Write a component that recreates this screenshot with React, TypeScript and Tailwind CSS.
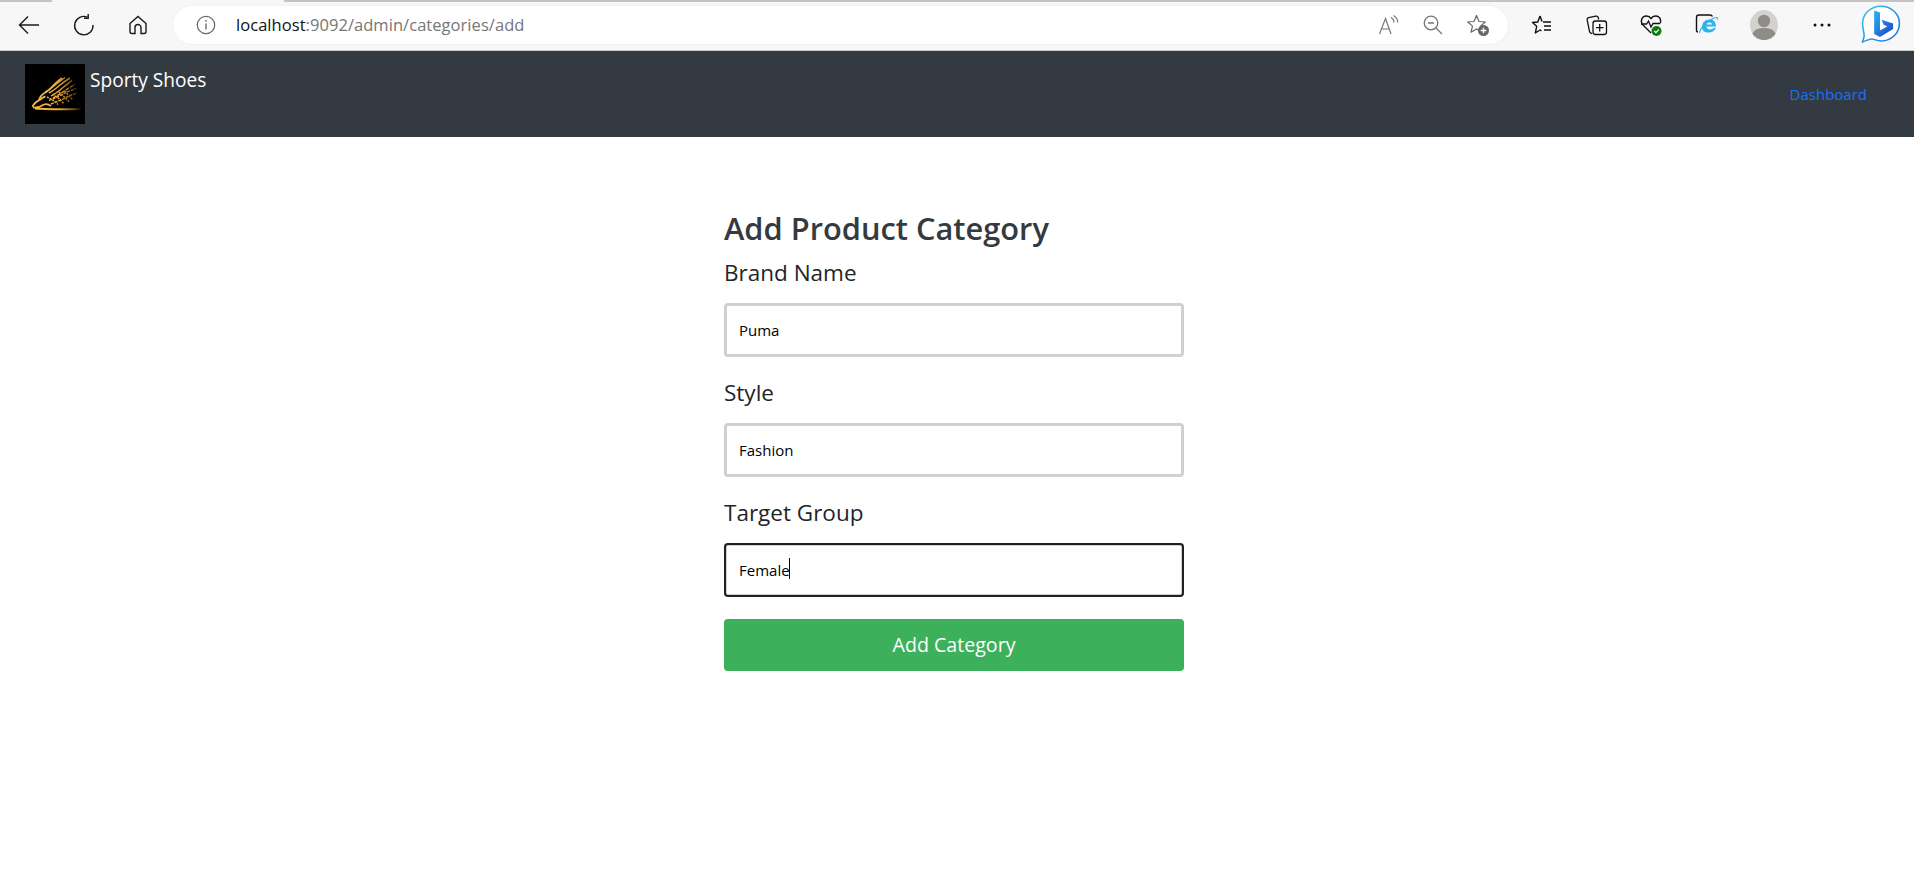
import React from 'react';

const uiFont = "font-['Open_Sans','Noto_Sans',sans-serif]";

const ToolButton = ({ children, className = '' }: { children: React.ReactNode; className?: string }) => (
  <div className={`flex items-center justify-center ${className}`}>{children}</div>
);

const BackIcon = () => (
  <svg width="24" height="24" viewBox="0 0 24 24" fill="none" stroke="#1a1a1a" strokeWidth="1.4">
    <path d="M22 12H3M11 3.5 2.5 12l8.500 8.500" />
  </svg>
);

const ReloadIcon = () => (
  <svg width="24" height="24" viewBox="0 0 24 24" fill="none" stroke="#1a1a1a" strokeWidth="1.4">
    <path d="M15.500 4.200A9.200 9.200 0 1 0 21 12" />
    <path d="M16.200 1v4.200H12" />
  </svg>
);

const HomeIcon = () => (
  <svg width="22" height="22" viewBox="0 0 22 22" fill="none" stroke="#1a1a1a" strokeWidth="1.4">
    <path d="M3 9.500 11 2.500l8 7v8a2 2 0 0 1-2 2h-3v-6a3 3 0 0 0-6 0v6H5a2 2 0 0 1-2-2z" />
  </svg>
);

const InfoIcon = () => (
  <svg width="20" height="20" viewBox="0 0 20 20" fill="none" stroke="#666">
    <circle cx="10" cy="10" r="8.700" strokeWidth="1.200" />
    <path d="M10 8.500v6" strokeWidth="1.300" />
    <circle cx="10" cy="5.800" r="0.900" fill="#666" stroke="none" />
  </svg>
);

const ReadAloudIcon = () => (
  <svg width="22" height="22" viewBox="0 0 22 22" fill="none" stroke="#777" strokeWidth="1.200">
    <path d="M1.500 20 7.500 4.500 13 20M3.500 15h8" />
    <path d="M13 3.500c1.800 1 3 2.700 3 5M15.500 1.500c2.500 1.500 4.200 4 4.200 7" />
  </svg>
);

const ZoomOutIcon = () => (
  <svg width="20" height="20" viewBox="0 0 20 20" fill="none" stroke="#777" strokeWidth="1.300">
    <circle cx="8" cy="8" r="6.800" />
    <path d="M5 8h6M13 13l6 6" />
  </svg>
);

const StarAddIcon = () => (
  <svg width="24" height="24" viewBox="0 0 24 24" fill="none">
    <path d="M10.500 2.500 13 8.500l6.300.5-4.800 4.100 1.500 6.100-5.500-3.300-5.500 3.300 1.500-6.100L1.700 9l6.300-.5z" stroke="#666" strokeWidth="1.200" strokeLinejoin="round" />
    <circle cx="17.500" cy="17.500" r="5.500" fill="#666" />
    <path d="M17.500 14.700v5.600M14.700 17.500h5.600" stroke="#fff" strokeWidth="1.300" />
  </svg>
);

const FavoritesIcon = () => (
  <svg width="22" height="22" viewBox="0 0 22 22" fill="none" stroke="#111" strokeWidth="1.400" strokeLinejoin="round">
    <path d="M9 2 6.800 8 1.500 8.500l4.200 3.800L4.300 19 9 16l1.500.8" />
    <path d="M9 2l2 5.500" />
    <path d="M12 8h8M13 12h7M13 16h7" />
  </svg>
);

const CollectionsIcon = () => (
  <svg width="22" height="22" viewBox="0 0 22 22" fill="none" stroke="#111" strokeWidth="1.300">
    <path d="M6 19.500c-1.200 0-2-.6-2.400-1.700L1.200 6.200C1 5 1.500 4 2.700 3.700l7-1.500c1.200-.2 2.200.3 2.500 1.300l.5 2" />
    <rect x="7" y="7" width="13.500" height="13.500" rx="2.500" />
    <path d="M13.700 10v7.500M10 13.700h7.500" />
  </svg>
);

const HealthIcon = () => (
  <svg width="24" height="24" viewBox="0 0 24 24" fill="none">
    <path d="M11 20 3.500 12.500C1.500 10.500 1 9 1.500 7c.6-2.500 2.800-4 5-4 1.800 0 3.400.8 4.500 2.500C12.100 3.800 13.700 3 15.500 3c2.200 0 4.400 1.500 5 4 .3 1.200.2 2.200-.2 3.200" stroke="#111" strokeWidth="1.400" />
    <path d="M1 11h5.500l2-3 2.500 6 2-3.500h7" stroke="#111" strokeWidth="1.300" />
    <circle cx="16.500" cy="18" r="5" fill="#107c10" />
    <path d="m14.300 18 1.600 1.600 2.900-3" stroke="#fff" strokeWidth="1.200" />
  </svg>
);

const IeModeIcon = () => (
  <svg width="24" height="24" viewBox="0 0 24 24" fill="none">
    <path d="M3 19c-1 0-1.500-.6-1.500-1.500V4.500C1.500 3 2.500 2 4 2h11c1.200 0 2 .5 2.400 1.500" stroke="#111" strokeWidth="1.400" />
    <path d="M7 14.500c0-4.800 3-8 7.500-8 4.300 0 6.500 2.800 6.500 7h-9.500c.2 3.500 5 4 7.500 1.300h2c-1.700 3.700-4.800 5-7.500 4.800-4-.2-6.500-2-6.500-5.100zm4.700-3h5.500c-.2-2.500-4.800-2.800-5.500 0z" fill="#2bb5ee" />
    <path d="M5 20c-1.200-2 3-9.500 14-15 2.500-1 4-.5 3.500 1.500" stroke="#2bb5ee" strokeWidth="1.200" />
  </svg>
);

const AvatarIcon = () => (
  <svg width="28" height="30" viewBox="0 0 28 30">
    <ellipse cx="14" cy="15" rx="14" ry="15" fill="#d4d2ce" />
    <circle cx="14" cy="11" r="6.200" fill="#8f8d89" />
    <path d="M2.500 24c1-4 5.500-6 11.500-6s10.500 2 11.500 6c-2.500 3.700-6.800 6-11.500 6S5 27.700 2.500 24z" fill="#8f8d89" />
  </svg>
);

const MoreIcon = () => (
  <svg width="18" height="4" viewBox="0 0 18 4" fill="#111">
    <circle cx="2" cy="2" r="1.500" />
    <circle cx="9" cy="2" r="1.500" />
    <circle cx="16" cy="2" r="1.500" />
  </svg>
);

const BingIcon = () => (
  <svg width="40" height="40" viewBox="0 0 38 40" fill="none" preserveAspectRatio="none">
    <defs>
      <linearGradient id="bingRing" x1="0" y1="0" x2="1" y2="1">
        <stop offset="0" stopColor="#39c8f0" />
        <stop offset="1" stopColor="#1a6fe0" />
      </linearGradient>
      <linearGradient id="bingB" x1="0" y1="0" x2="1" y2="1">
        <stop offset="0" stopColor="#2bb5f0" />
        <stop offset="1" stopColor="#1c3fc8" />
      </linearGradient>
    </defs>
    <path d="M19 1.200C9.200 1.200 1.500 9 1.500 18.500c0 5.500 1.500 9 1.500 12 0 2-1 4-1.500 6.500 3-1 6-3 8.500-3 3 0 5 2 9 2 10 0 17.500-8 17.500-17.500S28.800 1.200 19 1.200z" stroke="url(#bingRing)" strokeWidth="1.500" fill="#fff" />
    <path d="M12.500 5.500 18 7.500v18l7-4-3.500-1.700-2-5 11 3.800v5.500L18 32l-5.500-3z" fill="url(#bingB)" />
  </svg>
);

// wing logo: head at lower left, feathers fanning up to the right and fading out
const SportyLogo = () => (
  <svg width="60" height="60" viewBox="0 0 60 60" className="block w-full h-full" fill="none">
    <defs>
      <linearGradient id="goldFade" gradientUnits="userSpaceOnUse" x1="8" y1="0" x2="56" y2="0">
        <stop offset="0" stopColor="#f6bc48" />
        <stop offset="0.55" stopColor="#e8a636" />
        <stop offset="0.85" stopColor="#6a4814" />
        <stop offset="1" stopColor="#140d02" />
      </linearGradient>
    </defs>
    <rect width="60" height="60" fill="#000" />
    <g stroke="url(#goldFade)" strokeWidth="1.500">
      <path d="M10 44.500c12 1 30 .8 46 .5" strokeWidth="2" />
      <path d="M7.500 43c1-3 4-5.500 7-7 2-1.500 3.500-3 6-3.500" strokeWidth="1.800" />
      <path d="M8 43.500c4 .5 8-1 11-3 3-1 5 0 7 1.500" strokeWidth="1.600" />
      <path d="M14 36c1-4 4-6.500 8-8.500 3-2 6-6 10-9.500 1-1 3-2.500 5-4" strokeWidth="1.800" />
      <path d="M20 28c4-2 8-5 12-8.500 3-2 5-4 8-6" />
      <path d="M24 29c4-2 7-4.500 11-8 3-2.500 6-4.500 10-7" />
      <path d="M26 32c4-2 8-5 12-8.500 3-2 5-4 9-7" />
      <path d="M28 34c4-2 8-5 12-7.500 3-2 6-4 10-6" strokeDasharray="4 1" />
      <path d="M24 36.500c5-2 10-4.500 15-7 4-2 8-3.500 12-5" strokeDasharray="3 1" />
      <path d="M26 40c5-2 11-4.500 16-7 3-1.500 6-2.500 9-3.500" strokeDasharray="3 1" />
      <path d="M22 33c4 2 8 4 11 7.500" strokeDasharray="2 1" />
      <path d="M28 30c4 3 8 6 11 10" strokeDasharray="2 1" />
      <path d="M34 28c3 3 7 6 10 10" strokeDasharray="2 1" />
      <path d="M40 27c2 3 5 6 8 9" strokeDasharray="2 1" />
    </g>
  </svg>
);

const Field = ({ label, value, focused = false }: { label: string; value: string; focused?: boolean }) => (
  <div className="flex flex-col">
    <label className="pt-[2px] h-[35px] text-[22.500px] leading-[33px] text-[#212529] mb-[14px]">{label}</label>
    <div className="relative">
      <input
        type="text"
        readOnly
        value={value}
        className={`block w-full h-[54px] px-[12px] border-[3px] border-[#d0d0d0] rounded-[4px] bg-white text-[15px] text-black ${
          focused ? 'outline-2 outline-[#212121] -outline-offset-2' : 'outline-none'
        }`}
      />
      {focused && <span className="absolute left-[65px] top-[15px] h-[21px] w-px bg-black" />}
    </div>
  </div>
);

export default function App() {
  return (
    <div className={`min-h-[878px] bg-white ${uiFont}`}>
      {/* browser chrome */}
      <div className="h-[51px] bg-[#f7f7f7] border-b border-[#c9c9c9] flex items-center relative">
        <div className="absolute left-0 top-0 h-[2px] w-full bg-[#c4c4c4]" />
        <div className="absolute left-[52px] top-0 h-[2px] w-[232px] bg-[#f7f7f7]" />
        <ToolButton className="w-[24px] ml-[17px]"><BackIcon /></ToolButton>
        <ToolButton className="w-[24px] ml-[31px]"><ReloadIcon /></ToolButton>
        <ToolButton className="w-[24px] ml-[30px]"><HomeIcon /></ToolButton>
        <div className="ml-[23px] w-[1335px] h-[38px] rounded-full bg-white shadow-[0_0_2px_rgba(0,0,0,0.08)] flex items-center">
          <ToolButton className="ml-[23px]"><InfoIcon /></ToolButton>
          <span className="ml-[20px] text-[16.500px] tracking-[0.05px] text-[#111]">
            localhost<span className="text-[#767676]">:9092/admin/categories/add</span>
          </span>
          <div className="ml-auto flex items-center gap-[23px] mr-[18px]">
            <ReadAloudIcon />
            <ZoomOutIcon />
            <StarAddIcon />
          </div>
        </div>
        <div className="ml-[23px] flex items-center">
          <ToolButton className="w-[22px]"><FavoritesIcon /></ToolButton>
          <ToolButton className="w-[22px] ml-[33px]"><CollectionsIcon /></ToolButton>
          <ToolButton className="w-[24px] ml-[32px]"><HealthIcon /></ToolButton>
          <ToolButton className="w-[24px] ml-[31px]"><IeModeIcon /></ToolButton>
          <ToolButton className="w-[28px] ml-[31px]"><AvatarIcon /></ToolButton>
          <ToolButton className="w-[18px] ml-[35px]"><MoreIcon /></ToolButton>
          <ToolButton className="w-[40px] ml-[30px]"><BingIcon /></ToolButton>
        </div>
      </div>

      {/* navbar */}
      <nav className="h-[86px] bg-[#343a42] flex items-start pl-[25px] pr-[47px]">
        <div className="w-[60px] h-[60px] mt-[13px]">
          <SportyLogo />
        </div>
        <span className="ml-[5px] mt-[17px] text-[19.100px] leading-[24px] text-white">Sporty Shoes</span>
        <a className="ml-auto mt-[33px] text-[15px] leading-[20px] text-[#0f72ff]">Dashboard</a>
      </nav>

      {/* form */}
      <main className="flex justify-center pr-[6px] pt-[71px]">
        <form className="w-[460px] flex flex-col">
          <h3 className="text-[30.800px] leading-[40px] font-semibold text-[#343a40] mb-[6px]">Add Product Category</h3>
          <div className="flex flex-col gap-[17px]">
            <Field label="Brand Name" value="Puma" />
            <Field label="Style" value="Fashion" />
            <Field label="Target Group" value="Female" focused />
          </div>
          <button type="button" className="mt-[22px] h-[52px] rounded-[4px] bg-[#3cb05a] text-white text-[19.600px]">
            Add Category
          </button>
        </form>
      </main>
    </div>
  );
}
